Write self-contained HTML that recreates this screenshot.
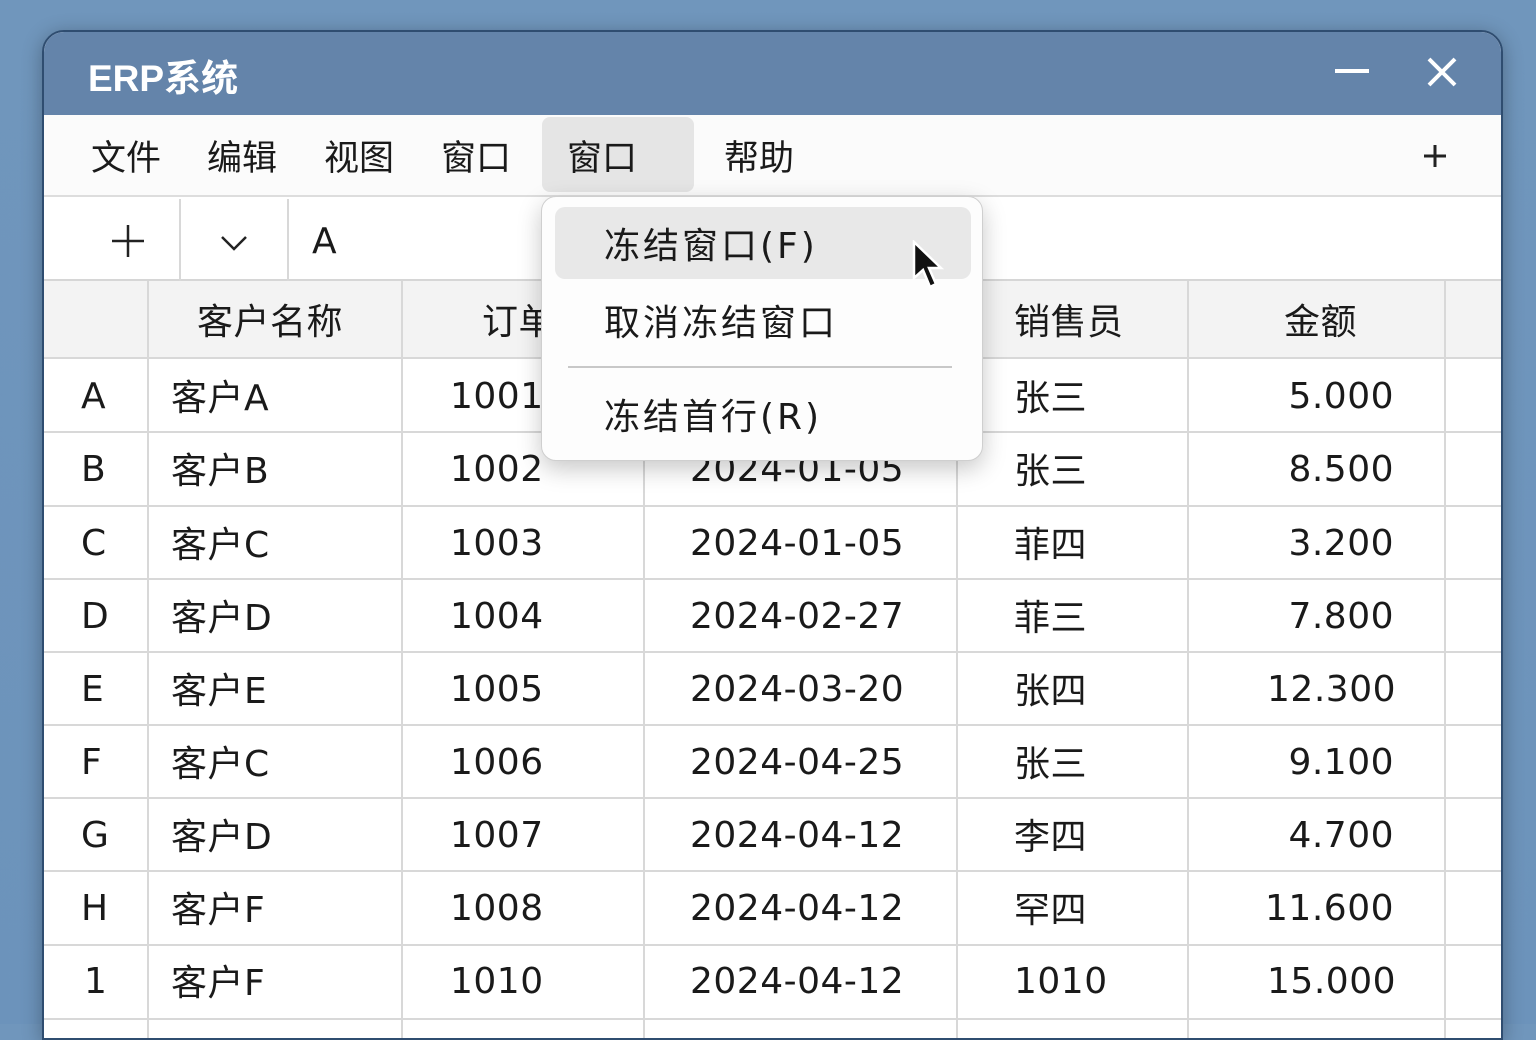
<!DOCTYPE html>
<html><head><meta charset="utf-8"><style>
*{margin:0;padding:0;box-sizing:border-box}
body{width:1536px;height:1024px;overflow:hidden;background:linear-gradient(#7096bc,#6c93bb);font-family:"Liberation Sans","Noto Sans CJK SC",sans-serif;position:relative;color:#1a1a1a}
.win{position:absolute;left:42px;top:30px;width:1461px;height:1010px;border-radius:22px 22px 0 0;overflow:hidden;background:#fff;border:2px solid #2f4d70;box-shadow:0 4px 20px rgba(0,0,0,.3)}
.title{position:absolute;left:0;top:0;width:100%;height:83px;background:#6484aa}
.title span{position:absolute;left:44px;top:16px;font-size:37px;font-weight:bold;color:#fff}
.menu{position:absolute;left:0;top:83px;width:100%;height:82px;background:#fbfbfb;border-bottom:2px solid #ddd}
.mi{position:absolute;top:15px;font-size:35px}
.tool{position:absolute;left:0;top:167px;width:100%;height:82px;background:#fff;border-bottom:2px solid #d6d6d6}
.c{position:absolute;font-size:36px;white-space:nowrap;font-family:"DejaVu Sans","Noto Sans CJK SC",sans-serif;letter-spacing:0.5px}
.n{margin-top:7px}
.r{text-align:right;width:200px}
.vl{position:absolute;width:2px;background:#d8d8d8}
.hl{position:absolute;height:2px;background:#d8d8d8;left:0;width:100%}
.dd{position:absolute;left:541px;top:196px;width:442px;height:265px;background:#fdfdfd;border:1.5px solid #cfcfcf;border-radius:15px;box-shadow:0 8px 24px rgba(0,0,0,.22)}
</style></head><body>
<div class="win">
<div class="title"><span>ERP系统</span>
<div style="position:absolute;left:1291px;top:37px;width:34px;height:4px;background:#fff"></div>
<svg style="position:absolute;left:1382px;top:24px" width="32" height="32"><path d="M3 3L29 29M29 3L3 29" stroke="#fff" stroke-width="4"/></svg>
</div>
<div class="menu">
<span class="mi" style="left:47px">文件</span>
<span class="mi" style="left:163px">编辑</span>
<span class="mi" style="left:280px">视图</span>
<span class="mi" style="left:397px">窗口</span>
<div style="position:absolute;left:498px;top:2px;width:152px;height:75px;background:#e5e5e5;border-radius:8px"></div>
<span class="mi" style="left:523px">窗口</span>
<span class="mi" style="left:680px">帮助</span>
<svg style="position:absolute;left:1380px;top:30px" width="22" height="22"><path d="M11 0V22M0 11H22" stroke="#222" stroke-width="3"/></svg>
</div>
<div class="tool">
<svg style="position:absolute;left:68px;top:26px" width="32" height="32"><path d="M16 0V32M0 16H32" stroke="#222" stroke-width="2.5"/></svg>
<div class="vl" style="left:135px;top:0;height:82px"></div>
<svg style="position:absolute;left:176px;top:36px" width="28" height="16"><path d="M2 2L14 14L26 2" stroke="#222" stroke-width="2.5" fill="none"/></svg>
<div class="vl" style="left:243px;top:0;height:82px"></div>
<span class="c" style="left:268px;top:22px">A</span>
</div>
<div style="position:absolute;left:0;top:249px;width:100%;height:77px;background:#f3f3f3"></div>
<div class="vl" style="left:103px;top:249px;height:800px"></div>
<div class="vl" style="left:357px;top:249px;height:800px"></div>
<div class="vl" style="left:599px;top:249px;height:800px"></div>
<div class="vl" style="left:912px;top:249px;height:800px"></div>
<div class="vl" style="left:1143px;top:249px;height:800px"></div>
<div class="vl" style="left:1400px;top:249px;height:800px"></div>
<div class="hl" style="top:325px"></div>
<div class="hl" style="top:399px"></div>
<div class="hl" style="top:473px"></div>
<div class="hl" style="top:546px"></div>
<div class="hl" style="top:619px"></div>
<div class="hl" style="top:692px"></div>
<div class="hl" style="top:765px"></div>
<div class="hl" style="top:838px"></div>
<div class="hl" style="top:912px"></div>
<div class="hl" style="top:986px"></div>
<span class="c" style="left:153px;top:261px">客户名称</span>
<span class="c" style="left:438px;top:261px">订单号</span>
<span class="c" style="left:700px;top:261px">日期</span>
<span class="c" style="left:970px;top:261px">销售员</span>
<span class="c" style="left:1240px;top:261px">金额</span>
</div>
<div style="position:absolute;left:0;top:-6px;width:0;height:0">
<span class="c n" style="left:81px;top:375px">A</span><span class="c" style="left:171px;top:375px">客户A</span><span class="c n" style="left:450px;top:375px">1001</span><span class="c n" style="left:690px;top:375px">2024-01-05</span><span class="c" style="left:1014px;top:375px">张三</span><span class="c n r" style="left:1194px;top:375px">5.000</span>
<span class="c n" style="left:81px;top:448px">B</span><span class="c" style="left:171px;top:448px">客户B</span><span class="c n" style="left:450px;top:448px">1002</span><span class="c n" style="left:690px;top:448px">2024-01-05</span><span class="c" style="left:1014px;top:448px">张三</span><span class="c n r" style="left:1194px;top:448px">8.500</span>
<span class="c n" style="left:81px;top:522px">C</span><span class="c" style="left:171px;top:522px">客户C</span><span class="c n" style="left:450px;top:522px">1003</span><span class="c n" style="left:690px;top:522px">2024-01-05</span><span class="c" style="left:1014px;top:522px">菲四</span><span class="c n r" style="left:1194px;top:522px">3.200</span>
<span class="c n" style="left:81px;top:595px">D</span><span class="c" style="left:171px;top:595px">客户D</span><span class="c n" style="left:450px;top:595px">1004</span><span class="c n" style="left:690px;top:595px">2024-02-27</span><span class="c" style="left:1014px;top:595px">菲三</span><span class="c n r" style="left:1194px;top:595px">7.800</span>
<span class="c n" style="left:81px;top:668px">E</span><span class="c" style="left:171px;top:668px">客户E</span><span class="c n" style="left:450px;top:668px">1005</span><span class="c n" style="left:690px;top:668px">2024-03-20</span><span class="c" style="left:1014px;top:668px">张四</span><span class="c n r" style="left:1196px;top:668px">12.300</span>
<span class="c n" style="left:81px;top:741px">F</span><span class="c" style="left:171px;top:741px">客户C</span><span class="c n" style="left:450px;top:741px">1006</span><span class="c n" style="left:690px;top:741px">2024-04-25</span><span class="c" style="left:1014px;top:741px">张三</span><span class="c n r" style="left:1194px;top:741px">9.100</span>
<span class="c n" style="left:81px;top:814px">G</span><span class="c" style="left:171px;top:814px">客户D</span><span class="c n" style="left:450px;top:814px">1007</span><span class="c n" style="left:690px;top:814px">2024-04-12</span><span class="c" style="left:1014px;top:814px">李四</span><span class="c n r" style="left:1194px;top:814px">4.700</span>
<span class="c n" style="left:81px;top:887px">H</span><span class="c" style="left:171px;top:887px">客户F</span><span class="c n" style="left:450px;top:887px">1008</span><span class="c n" style="left:690px;top:887px">2024-04-12</span><span class="c" style="left:1014px;top:887px">罕四</span><span class="c n r" style="left:1194px;top:887px">11.600</span>
<span class="c n" style="left:84px;top:960px">1</span><span class="c" style="left:171px;top:960px">客户F</span><span class="c n" style="left:450px;top:960px">1010</span><span class="c n" style="left:690px;top:960px">2024-04-12</span><span class="c n" style="left:1014px;top:960px">1010</span><span class="c n r" style="left:1196px;top:960px">15.000</span>
</div>
<div class="dd">
<div style="position:absolute;left:13px;top:10px;width:416px;height:72px;background:#e8e8e8;border-radius:10px"></div>
<span class="c" style="left:62px;top:20px;letter-spacing:3px">冻结窗口(F)</span>
<span class="c" style="left:62px;top:97px;letter-spacing:3px">取消冻结窗口</span>
<div style="position:absolute;left:26px;top:169px;width:384px;height:2px;background:#c8c8c8"></div>
<span class="c" style="left:62px;top:191px;letter-spacing:3px">冻结首行(R)</span>
<svg style="position:absolute;left:369px;top:43px" width="36" height="52"><path d="M3 2L3 38L12 30L19 47L25 44L18 28L30 28Z" fill="#111" stroke="#fff" stroke-width="2.5"/></svg>
</div>
</body></html>
